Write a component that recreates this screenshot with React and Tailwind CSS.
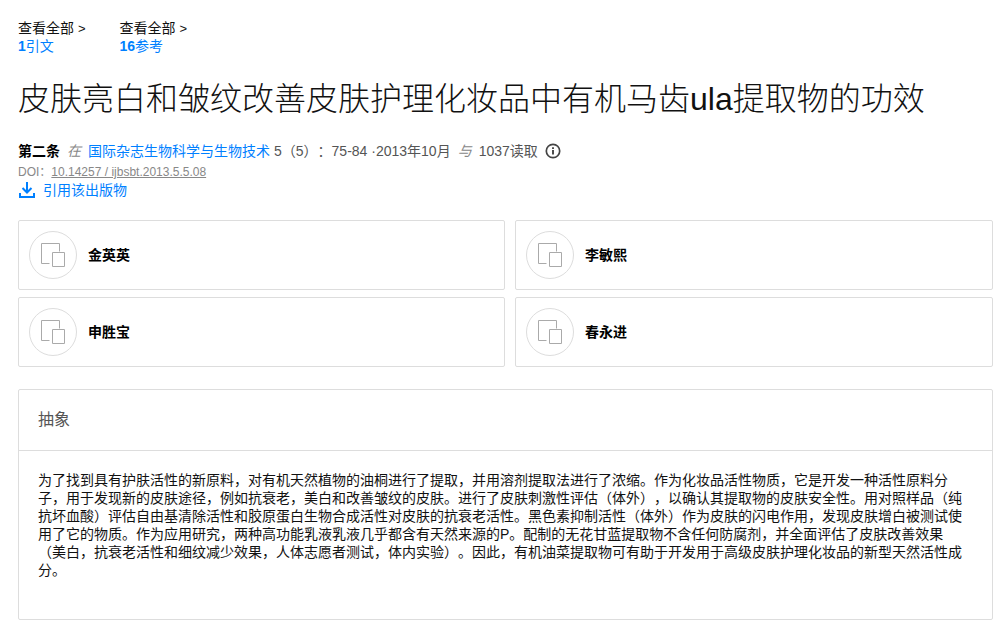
const stats = [
  { id: "citations", count: 1, label: "引文" },
  { id: "references", count: 16, label: "参考" },
];

const authors = ["金英英", "李敏熙", "申胜宝", "春永进"];

const abstractText =
  "为了找到具有护肤活性的新原料，对有机天然植物的油桐进行了提取，并用溶剂提取法进行了浓缩。作为化妆品活性物质，它是开发一种活性原料分子，用于发现新的皮肤途径，例如抗衰老，美白和改善皱纹的皮肤。进行了皮肤刺激性评估（体外），以确认其提取物的皮肤安全性。用对照样品（纯抗坏血酸）评估自由基清除活性和胶原蛋白生物合成活性对皮肤的抗衰老活性。黑色素抑制活性（体外）作为皮肤的闪电作用，发现皮肤增白被测试使用了它的物质。作为应用研究，两种高功能乳液乳液几乎都含有天然来源的P。配制的无花甘蓝提取物不含任何防腐剂，并全面评估了皮肤改善效果（美白，抗衰老活性和细纹减少效果，人体志愿者测试，体内实验）。因此，有机油菜提取物可有助于开发用于高级皮肤护理化妆品的新型天然活性成分。";

function InfoIcon() {
  return (
    <svg width="16" height="16" viewBox="0 0 16 16" fill="none" aria-hidden="true">
      <circle cx="8" cy="8" r="6.7" stroke="#444" strokeWidth="1.7" />
      <path d="M8 7v4.6M8 4.2v1.8" stroke="#444" strokeWidth="1.9" />
    </svg>
  );
}

function DownloadIcon() {
  return (
    <svg width="18" height="16" viewBox="0 0 18 16" fill="none" stroke="#0080ff" strokeWidth="2" aria-hidden="true">
      <path d="M9 0v10M4.5 6L9 10.5 13.5 6M2 11v4h14v-4" />
    </svg>
  );
}

function AvatarIcon() {
  return (
    <span className="flex size-12 shrink-0 items-center justify-center rounded-full border border-[#ddd]">
      <svg width="24" height="24" viewBox="0 0 24 24" fill="none" stroke="#aaa" aria-hidden="true">
        <path d="M8.5 20.5h-8v-20h18v8" />
        <path d="M11.5 9.5h12v14h-12z" />
      </svg>
    </span>
  );
}

function AuthorCard({ name }) {
  return (
    <li className="flex h-[70px] items-center rounded-xs border border-[#ddd] px-2.5">
      <AvatarIcon />
      <a href="#author" className="ml-[11px] font-bold text-black">
        {name}
      </a>
    </li>
  );
}

export default function App() {
  return (
    <main className="bg-white pt-[19px] pr-2 pb-4 pl-[18px] font-['Liberation_Sans','Noto_Sans_CJK_SC',sans-serif] text-sm leading-[18px] text-[#111] [text-spacing-trim:space-all]">
      <nav className="flex gap-[34px]">
        {stats.map((s) => (
          <a key={s.id} href={`#${s.id}`} className="block">
            <span className="block">
              查看全部 <span className="text-[13px] leading-none">&gt;</span>
            </span>
            <span className="block text-[#0080ff]">
              <b>{s.count}</b>
              {s.label}
            </span>
          </a>
        ))}
      </nav>

      <h1 className="mt-6 text-[32px] leading-10 font-light">
        皮肤亮白和皱纹改善皮肤护理化妆品中有机马齿ula提取物的功效
      </h1>

      <div className="mt-[23px] flex items-center text-[#555]">
        <b className="text-black">第二条</b>
        <i className="ml-[7px] text-[#888]">在</i>
        <a href="#journal" className="ml-[7px] text-[#0080ff]">国际杂志生物科学与生物技术</a>
        <span className="ml-1">5（5）：75-84 ·2013年10月</span>
        <i className="ml-[7px] text-[#888]">与</i>
        <span className="ml-[7px]">1037读取</span>
        <button type="button" aria-label="信息" className="ml-[7px]">
          <InfoIcon />
        </button>
      </div>
      <div className="mt-1 flex text-xs leading-4 text-[#888]">
        <span>DOI：</span>
        <a href="#doi" className="underline">10.14257 / ijbsbt.2013.5.5.08</a>
      </div>
      <a href="#cite" className="mt-px flex w-fit items-center gap-[7px] text-[#0080ff]">
        <DownloadIcon />
        引用该出版物
      </a>

      <ul className="mt-[21px] grid grid-cols-[487fr_478fr] gap-x-2.5 gap-y-[7px]">
        {authors.map((name) => (
          <AuthorCard key={name} name={name} />
        ))}
      </ul>

      <section className="mt-[22px] rounded-xs border border-[#ddd]">
        <h2 className="border-b border-[#ddd] px-[19px] py-5 text-base leading-5 text-[#555]">抽象</h2>
        <p className="pt-5 pr-6 pb-10 pl-[19px]">{abstractText}</p>
      </section>
    </main>
  );
}
